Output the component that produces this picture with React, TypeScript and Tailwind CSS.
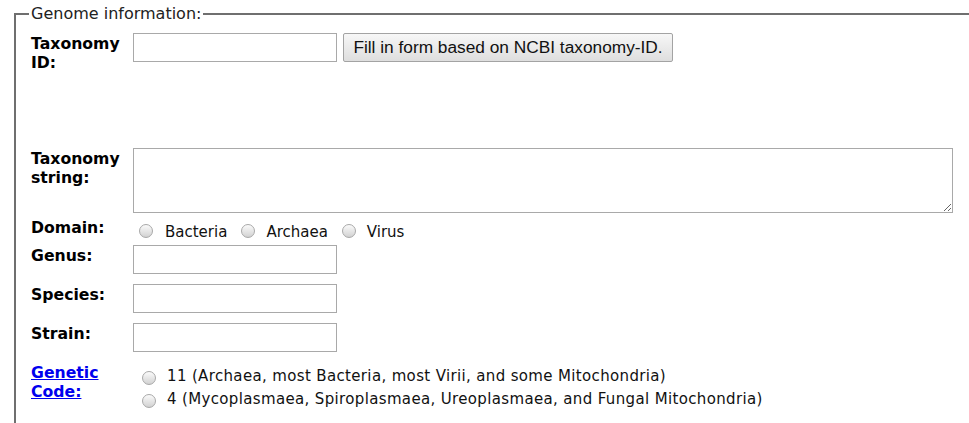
import type { ReactNode } from "react";

const Radio = ({ className = "" }: { className?: string }) => (
  <span
    className={`inline-block w-[14px] h-[14px] shrink-0 rounded-full border border-[#a8a8a8] bg-linear-to-b from-[#fbfbfb] to-[#d2d2d2] ${className}`}
  />
);

const Label = ({ children }: { children: ReactNode }) => (
  <div className="w-[100px] shrink-0 translate-y-[1px] text-[15.7px] leading-[19px] font-bold text-black">
    {children}
  </div>
);

const TextInput = () => (
  <input
    type="text"
    className="w-[204px] h-[29px] border border-[#a9a9a9] bg-white px-1"
  />
);

export default function App() {
  return (
    <div
      className="h-[423px] w-full overflow-hidden bg-white text-black"
      style={{ fontFamily: '"DejaVu Sans", Verdana, sans-serif' }}
    >
      <fieldset className="ml-[14px] mt-[4px] w-[1000px] border-2 border-[#6f6f6f] pl-[15px] pt-[9px] pb-6">
        <legend className="-ml-[2px] px-[2px] text-[16px] leading-[20px] text-[#222]">
          Genome information:
        </legend>

        {/* taxonomy id */}
        <div className="flex items-start gap-[2px]">
          <Label>Taxonomy ID:</Label>
          <div className="flex items-start gap-[6px]">
            <TextInput />
            <button
              type="button"
              className="w-[330px] h-[29px] rounded-[2px] border border-[#a3a3a3] bg-linear-to-b from-[#f7f7f7] to-[#dedede] text-[17.3px] text-[#111]"
              style={{ fontFamily: '"Liberation Sans", Arial, sans-serif' }}
            >
              Fill in form based on NCBI taxonomy-ID.
            </button>
          </div>
        </div>

        {/* taxonomy string */}
        <div className="mt-[77px] flex items-start gap-[2px]">
          <Label>Taxonomy string:</Label>
          <textarea className="w-[820px] h-[65px] border border-[#a9a9a9] bg-white" />
        </div>

        {/* domain */}
        <div className="mt-[4px] flex items-start gap-[2px]">
          <Label>Domain:</Label>
          <div className="mt-[4px] flex items-center h-[19px] text-[15px] text-[#111]">
            <Radio className="ml-[6px]" />
            <span className="ml-[12px] translate-y-[2px]">Bacteria</span>
            <Radio className="ml-[14px]" />
            <span className="ml-[11px] translate-y-[2px]">Archaea</span>
            <Radio className="ml-[14px]" />
            <span className="ml-[11px] translate-y-[2px]">Virus</span>
          </div>
        </div>

        <div className="mt-[5px] flex items-start gap-[2px]">
          <Label>Genus:</Label>
          <TextInput />
        </div>

        <div className="mt-[10px] flex items-start gap-[2px]">
          <Label>Species:</Label>
          <TextInput />
        </div>

        <div className="mt-[10px] flex items-start gap-[2px]">
          <Label>Strain:</Label>
          <TextInput />
        </div>

        {/* genetic code */}
        <div className="mt-[10px] flex items-start gap-[2px]">
          <Label>
            <a href="#" className="text-[#0000ee] underline">
              Genetic Code:
            </a>
          </Label>
          <div className="mt-[4px] flex flex-col text-[15px] tracking-[0.35px] text-[#111]">
            <div className="flex items-center h-[23px]">
              <Radio className="ml-[9px]" />
              <span className="ml-[11px] -translate-y-[1px]">
                11 (Archaea, most Bacteria, most Virii, and some Mitochondria)
              </span>
            </div>
            <div className="flex items-center h-[23px]">
              <Radio className="ml-[9px]" />
              <span className="ml-[11px] -translate-y-[1px]">
                4 (Mycoplasmaea, Spiroplasmaea, Ureoplasmaea, and Fungal
                Mitochondria)
              </span>
            </div>
          </div>
        </div>
      </fieldset>
    </div>
  );
}
